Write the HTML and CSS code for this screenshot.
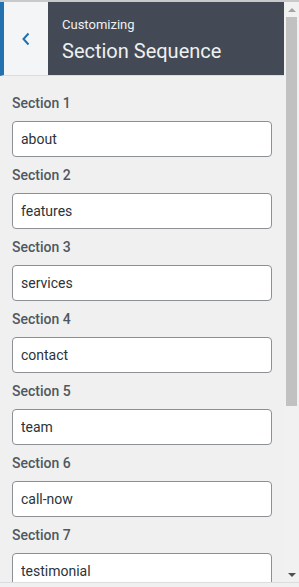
FILE: index.html
```html
<!DOCTYPE html>
<html lang="en">
<head>
    <meta charset="utf-8" />
    <meta name="viewport" content="width=device-width, initial-scale=1.0" />
    <link rel="stylesheet" href="styles.css">
    <title>Section Sequence</title>
</head>
<body>
    <div class="topline"></div>
    <div class="frame">
        <div class="panel">
            <div class="head">
                <button class="back" aria-label="Back">
                    <svg width="12" height="16" viewBox="0 0 12 16"><path d="M8.5 2.5 L3.5 8 L8.5 13.5" fill="none" stroke="#2271b1" stroke-width="2"/></svg>
                </button>
                <div class="head-title">
                    <span class="sub">Customizing</span>
                    <h1 class="title">Section Sequence</h1>
                </div>
            </div>

            <div class="list">
                <div class="field">
                    <label class="label" for="s1">Section 1</label>
                    <input class="box" id="s1" type="text" value="about">
                </div>
                <div class="field">
                    <label class="label" for="s2">Section 2</label>
                    <input class="box" id="s2" type="text" value="features">
                </div>
                <div class="field">
                    <label class="label" for="s3">Section 3</label>
                    <input class="box" id="s3" type="text" value="services">
                </div>
                <div class="field">
                    <label class="label" for="s4">Section 4</label>
                    <input class="box" id="s4" type="text" value="contact">
                </div>
                <div class="field">
                    <label class="label" for="s5">Section 5</label>
                    <input class="box" id="s5" type="text" value="team">
                </div>
                <div class="field">
                    <label class="label" for="s6">Section 6</label>
                    <input class="box" id="s6" type="text" value="call-now">
                </div>
                <div class="field">
                    <label class="label" for="s7">Section 7</label>
                    <input class="box" id="s7" type="text" value="testimonial">
                </div>
            </div>
        </div>

        <!-- fake scrollbar, the browser one is not drawn -->
        <div class="scrollbar">
            <div class="arrow arrow-up"></div>
            <div class="track">
                <div class="thumb"></div>
            </div>
            <div class="arrow arrow-down"></div>
        </div>
    </div>
    <div class="bottomline"></div>
</body>
</html>
```

FILE: styles.css
```css
html, body {
    margin: 0;
    height: 100%;
    overflow: hidden;
}

body {
    background-color: #f0f0f1;
    font-family: Roboto, "Liberation Sans", sans-serif;
    display: flex;
    flex-direction: column;
}

.topline {
    height: 2px;
    background-color: #c9c9cb;
    flex: none;
}

.frame {
    flex: 1;
    display: flex;
    min-height: 0;
}

.panel {
    flex: 1;
    overflow: hidden;
    background-color: #f0f0f1;
}

.bottomline {
    height: 4px;
    border-top: 1px solid #dcdcde;
    background-color: #f0f0f1;
    flex: none;
}

/* scrollbar */
.scrollbar {
    width: 15px;
    flex: none;
    display: flex;
    flex-direction: column;
    background-color: #f1f1f1;
}

.arrow {
    height: 15px;
    flex: none;
    display: flex;
    justify-content: center;
    align-items: center;
}

.arrow::before {
    content: "";
    border-left: 4px solid transparent;
    border-right: 4px solid transparent;
}

.arrow-up::before {
    border-bottom: 4px solid #a3a3a3;
}

.arrow-down::before {
    border-top: 4px solid #505050;
}

.track {
    flex: 1;
    padding: 0 2px;
}

.thumb {
    height: 389px;
    background-color: #c1c1c1;
}

/* header */
.head {
    display: flex;
    height: 73px;
    border-left: 4px solid #2271b1;
    border-bottom: 1px solid #dcdcde;
}

.back {
    width: 44px;
    background-color: #f3f5f6;
    border: none;
    padding: 0;
    display: flex;
    justify-content: center;
    align-items: center;
    cursor: pointer;
}

.head-title {
    flex: 1;
    background-color: #434a55;
    color: #f0f0f1;
    padding: 14px 14px 0;
}

.sub {
    display: block;
    font-size: 13px;
    line-height: 17px;
}

.title {
    margin: 6px 0 0;
    font-size: 20px;
    font-weight: 400;
    line-height: 24px;
}

/* list */
.list {
    padding: 18px 12px 20px;
}

.field {
    margin-bottom: 9px;
}

.label {
    display: block;
    font-size: 14px;
    font-weight: 500;
    line-height: 18px;
    color: #50575e;
    margin-bottom: 9px;
}

.box {
    display: block;
    width: 100%;
    height: 36px;
    box-sizing: border-box;
    border: 1px solid #8c8f94;
    border-radius: 4px;
    background-color: #ffffff;
    padding: 0 8px;
    font-family: Roboto, "Liberation Sans", sans-serif;
    font-size: 14px;
    color: #2c3338;
}
```
